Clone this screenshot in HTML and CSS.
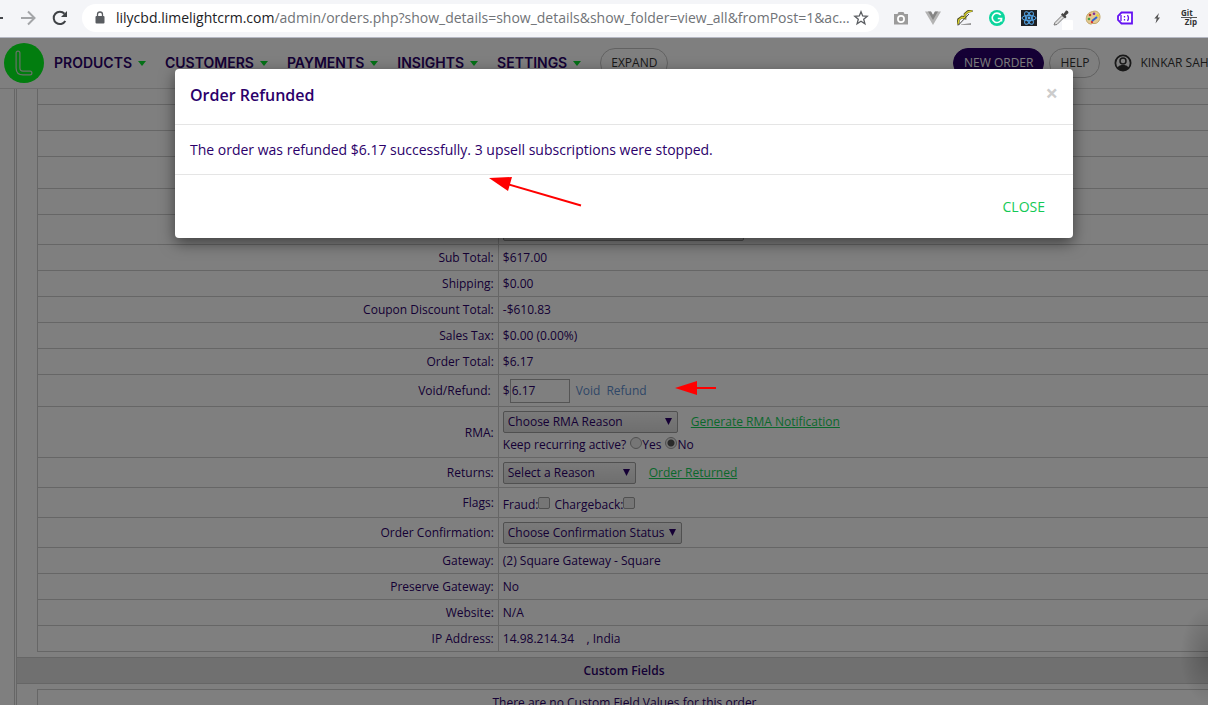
FILE: index.html
```html
<!DOCTYPE html>
<html lang="en">
<head>
<meta charset="utf-8">
<title>Order Details</title>
<link rel="stylesheet" href="styles.css">
</head>
<body>
<div class="browser-bar">
  <button class="bar-btn back" aria-label="Back"><svg width="20" height="20" viewBox="0 0 20 20"><path d="M4 10H17" stroke="#45484c" stroke-width="2" fill="none"/></svg></button>
  <button class="bar-btn" aria-label="Forward"><svg width="20" height="20" viewBox="0 0 20 20"><path d="M3 10H16M10 3.500L16.500 10L10 16.500" stroke="#a3a5a8" stroke-width="2" fill="none"/></svg></button>
  <button class="bar-btn" aria-label="Reload"><svg width="20" height="20" viewBox="0 0 20 20"><path d="M15.300 13A6.200 6.200 0 1 1 14.500 5.700" stroke="#3f4246" stroke-width="2" fill="none"/><path d="M17 3V9H11Z" fill="#3f4246"/></svg></button>
  <div class="omnibox">
    <svg class="lock" width="12" height="14" viewBox="0 0 12 14"><rect x="1.500" y="5" width="9" height="7.500" rx="1" fill="#5a5d61"/><path d="M3.500 5.500V3.500a2.500 2.500 0 0 1 5 0V5.500" fill="none" stroke="#5a5d61" stroke-width="1.300"/></svg>
    <div class="url"><span class="host">lilycbd.limelightcrm.com</span>/admin/orders.php?show_details=show_details&amp;show_folder=view_all&amp;fromPost=1&amp;ac…</div>
    <button class="star" aria-label="Bookmark this page"><svg width="16" height="16" viewBox="0 0 16 16"><path d="M8 1.800L9.700 6L14.200 6.300L10.700 9.200L11.900 13.700L8 11.200L4.100 13.700L5.300 9.200L1.800 6.300L6.300 6Z" fill="none" stroke="#5a5d61" stroke-width="1.300"/></svg></button>
  </div>
  <div class="extensions">
    <svg width="16" height="16" viewBox="0 0 16 16"><path d="M1 4H4.500L5.500 2H10.500L11.500 4H15V14.500H1Z" fill="#9b9b9b"/><circle cx="8" cy="9" r="3.100" fill="none" stroke="#fff" stroke-width="1.700"/></svg>
    <svg width="16" height="16" viewBox="0 0 16 16"><path d="M0 1.500H6L8 5L10 1.500H16L8 15Z" fill="#b3b3b3"/><path d="M3 1.500H6L8 5L10 1.500H13L8 10Z" fill="#858585"/></svg>
    <svg width="16" height="16" viewBox="0 0 16 16"><path d="M1 14.500L1.500 9.500L5 7L8 8V4L11 1.500L15.500 .5" fill="none" stroke="#4d4c24" stroke-width="2.600"/><path d="M1 14L1.800 9.800L5 7.300L8 8.200V4.200L11 1.800L15 .8" fill="none" stroke="#dcd52c" stroke-width="1.300"/><path d="M1 15.500L12 4" stroke="#444"/><path d="M4 14.500L14 13V15H4Z" fill="#999"/></svg>
    <svg width="16" height="16" viewBox="0 0 16 16"><circle cx="8" cy="8" r="8" fill="#0bd59d"/><path d="M11.700 5A4.700 4.700 0 1 0 12.600 8.500H8.800M12.500 8.500V11.500" fill="none" stroke="#fff" stroke-width="1.600"/></svg>
    <svg width="16" height="16" viewBox="0 0 16 16"><rect width="16" height="16" fill="#202124"/><g fill="none" stroke="#55a9ed"><ellipse cx="8" cy="8" rx="7" ry="2.700"/><ellipse cx="8" cy="8" rx="7" ry="2.700" transform="rotate(60 8 8)"/><ellipse cx="8" cy="8" rx="7" ry="2.700" transform="rotate(120 8 8)"/></g><circle cx="8" cy="8" r="1.400" fill="#55a9ed"/></svg>
    <svg class="picker" width="20" height="20" viewBox="0 0 20 20"><path d="M1 15L2 12.500L9 5.500L11 7.500L4 14.500Z" fill="#ddd" stroke="#777"/><path d="M8 4.500L9.500 3L10.500 4L13 .5Q15.500 0 15.500 3L12.500 5.500L13.500 7L12 8.500Z" fill="#444"/><rect x="9" y="10" width="11" height="11" rx="1" fill="#fff"/></svg>
    <svg width="16" height="16" viewBox="0 0 16 16"><path d="M7.500 1.500C12 0 15 3 15 7C15 11 12 14 9 13.500C6 13 7 15 4 13.500C1 12 1 9 1.500 7C2 4 4 2.500 7.500 1.500Z" fill="#e3c991" stroke="#c4a66a"/><circle cx="5" cy="5" r="1.300" fill="#c0392b"/><circle cx="9" cy="3.700" r="1.300" fill="#7b2fa0"/><circle cx="12.500" cy="5.500" r="1.200" fill="#e7d228"/><circle cx="4" cy="9" r="1.300" fill="#43a047"/><circle cx="7" cy="12" r="1.200" fill="#d33"/><path d="M7 11L12 7" stroke="#2f62cf" stroke-width="2"/></svg>
    <svg width="16" height="16" viewBox="0 0 16 16"><path d="M4.500 2.500H15V13.500H4.500L1 10V6Z" fill="#fff" stroke="#6412f2" stroke-width="1.800"/><path d="M4 5V11M7.500 6V7.500M7.500 9V10.500M10.500 5Q12.500 8 10.500 11" fill="none" stroke="#6412f2" stroke-width="1.300"/></svg>
    <svg width="16" height="16" viewBox="0 0 16 16"><path d="M10 3L5.300 8.500H7.700L6.500 13.500L11 7.500H8.700Z" fill="#555"/></svg>
    <div class="gitzip"><span>Git</span><span>Zip</span></div>
  </div>
</div>

<div class="viewport">
  <div class="app">
    <header class="topbar">
      <a class="logo" href="#" aria-label="Home"><svg width="40" height="40" viewBox="0 0 40 40"><circle cx="20" cy="20" r="20" fill="#04fa1e"/><path d="M14 10V25Q14 30 19 30H26" fill="none" stroke="#d2e6d2" stroke-width="5" stroke-linecap="round"/><path d="M14 10V25Q14 30 19 30H26" fill="none" stroke="#04fa1e" stroke-width="2.600" stroke-linecap="round"/></svg></a>
      <nav class="menu">
        <button>PRODUCTS</button>
        <button>CUSTOMERS</button>
        <button>PAYMENTS</button>
        <button>INSIGHTS</button>
        <button>SETTINGS</button>
      </nav>
      <button class="pill">EXPAND</button>
      <div class="account">
        <button class="pill primary">NEW ORDER</button>
        <button class="pill">HELP</button>
        <a class="user" href="#"><svg width="18" height="18" viewBox="0 0 18 18"><circle cx="9" cy="9" r="7.600" fill="none" stroke="#333" stroke-width="1.800"/><circle cx="9" cy="7" r="3" fill="none" stroke="#333" stroke-width="1.500"/><path d="M3 14Q5 11 7.500 11H10.500Q13 11 15 14Q12 17 9 17Q6 17 3 14Z" fill="#333"/></svg>KINKAR SAH</a>
      </div>
    </header>

    <main class="sheet">
      <div class="panel">
        <table class="details">
          <colgroup><col class="label-col"><col></colgroup>
          <tbody>
            <tr class="partial"><th></th><td></td></tr>
            <tr><th></th><td></td></tr>
            <tr><th></th><td></td></tr>
            <tr class="tall"><th></th><td></td></tr>
            <tr><th></th><td></td></tr>
            <tr class="mid"><th></th><td><select class="w-wide" aria-label="Order item"><option></option></select></td></tr>
            <tr><th>Sub Total:</th><td>$617.00</td></tr>
            <tr><th>Shipping:</th><td>$0.00</td></tr>
            <tr><th>Coupon Discount Total:</th><td>-$610.83</td></tr>
            <tr><th>Sales Tax:</th><td>$0.00 (0.00%)</td></tr>
            <tr><th>Order Total:</th><td>$6.17</td></tr>
            <tr class="tall"><th><label for="refund">Void/Refund:&nbsp;</label></th><td><div class="line">$<input id="refund" class="amount" type="text" value="6.17"><a class="action" href="#">Void</a><a class="action" href="#">Refund</a></div></td></tr>
            <tr class="double"><th><label for="rma">RMA:</label></th><td>
              <div class="line"><select id="rma" class="w-rma"><option>Choose RMA Reason</option></select><a class="go" href="#">Generate RMA Notification</a></div>
              <div class="line choices">Keep recurring active?<input id="yes" type="radio" name="recurring"><label for="yes">Yes</label><input id="no" type="radio" name="recurring" checked><label for="no">No</label></div>
            </td></tr>
            <tr class="mid"><th><label for="returns">Returns:</label></th><td><div class="line"><select id="returns" class="w-returns"><option>Select a Reason</option></select><a class="go" href="#">Order Returned</a></div></td></tr>
            <tr class="mid"><th>Flags:</th><td><div class="line flags"><label for="fraud">Fraud:</label><input id="fraud" type="checkbox"><label for="charge">Chargeback:</label><input id="charge" type="checkbox"></div></td></tr>
            <tr class="mid"><th><label for="confirm">Order Confirmation:</label></th><td><div class="line"><select id="confirm" class="w-confirm"><option>Choose Confirmation Status</option></select></div></td></tr>
            <tr><th>Gateway:</th><td>(2) Square Gateway - Square</td></tr>
            <tr><th>Preserve Gateway:</th><td>No</td></tr>
            <tr><th>Website:</th><td>N/A</td></tr>
            <tr><th>IP Address:</th><td>14.98.214.34 &nbsp;&nbsp; , India</td></tr>
          </tbody>
        </table>
        <h2 class="band">Custom Fields</h2>
        <p class="empty">There are no Custom Field Values for this order</p>
      </div>
    </main>
    <div class="widget-shadow"></div>
  </div>

  <div class="backdrop">
    <section class="dialog" role="dialog" aria-labelledby="dialog-title">
      <div class="dialog-head">
        <h1 id="dialog-title">Order Refunded</h1>
        <button class="dismiss" aria-label="Dismiss">×</button>
      </div>
      <p class="dialog-body">The order was refunded $6.17 successfully. 3 upsell subscriptions were stopped.</p>
      <div class="dialog-foot"><button class="close">CLOSE</button></div>
      <svg class="arrow-long" width="94" height="32" viewBox="0 0 94 32"><path d="M18 8L92 29.500" stroke="#f00" stroke-width="2"/><path d="M0 2L23 1L19 15Z" fill="#f00"/></svg>
    </section>
    <svg class="arrow-short" width="42" height="16" viewBox="0 0 42 16"><path d="M20 8H41" stroke="#f00" stroke-width="2"/><path d="M0 8L22 1V15Z" fill="#f00"/></svg>
  </div>
</div>
</body>
</html>
```
FILE: styles.css
```css
* { box-sizing: border-box; }

body {
  margin: 0;
  height: 100vh;
  display: flex;
  flex-direction: column;
  overflow: hidden;
  font: 12px/18px "Open Sans", "Noto Sans", sans-serif;
  color: #2b006a;
}

button {
  font: inherit;
  color: inherit;
  background: none;
  border: 0;
  padding: 0;
  cursor: pointer;
}

svg { display: block; flex: none; }

/* Browser toolbar */
.browser-bar {
  height: 38px;
  flex: none;
  display: flex;
  align-items: center;
  gap: 12px;
  padding: 0 11px 2px 0;
  background: #f4f5f8;
  border-bottom: 1px solid #b5b8c3;
}
.back { margin-left: -14px; }
.omnibox {
  flex: 1;
  min-width: 0;
  height: 28px;
  display: flex;
  align-items: center;
  padding: 0 10px 0 12px;
  border-radius: 14px;
  background: #fff;
}
.url {
  flex: 1;
  min-width: 0;
  margin-left: 10px;
  overflow: hidden;
  white-space: nowrap;
  font: 14px/20px "Open Sans", sans-serif;
  color: #707377;
}
.host { color: #202124; }
.extensions {
  display: flex;
  align-items: center;
  gap: 16px;
  margin-left: 2px;
}
.picker { margin: 4px -4px 0 0; }
.gitzip {
  width: 16px;
  display: flex;
  flex-direction: column;
  font: 700 8px/8px "Open Sans", sans-serif;
  color: #333;
}
.gitzip span:last-child {
  border-top: 1px solid #555;
  text-align: right;
}

/* Application */
.viewport {
  flex: 1;
  min-height: 0;
  position: relative;
  overflow: hidden;
}
.app { width: calc(100% + 40px); }
.topbar {
  height: 51px;
  display: flex;
  align-items: center;
  padding-left: 4px;
  border-bottom: 1px solid #dcdcdc;
  white-space: nowrap;
}
.menu {
  display: flex;
  gap: 19px;
  margin: 0 19px 0 10px;
  font: 600 14px/18px Inter, sans-serif;
}
.menu button {
  display: flex;
  align-items: center;
  gap: 6px;
}
.menu button::after {
  content: "";
  border: 4px solid transparent;
  border-top: 5px solid #08e02c;
  border-bottom: 0;
}
.pill {
  height: 30px;
  padding: 0 10px;
  border: 1px solid #c4c4c4;
  border-radius: 15px;
  font-weight: 500;
  color: #333;
}
.primary {
  background: #2b006a;
  border-color: #2b006a;
  color: #fff;
}
.account {
  display: flex;
  align-items: center;
  gap: 5px;
  margin-left: auto;
  width: 295px;
}
.user {
  display: flex;
  align-items: center;
  gap: 8px;
  margin-left: 9px;
  font-weight: 500;
  color: #333;
  text-decoration: none;
}

.sheet {
  margin: 0 16px 0 14px;
  border-left: 1px solid #ccc;
  padding-left: 1px;
}
.panel { border-left: 1px solid #ccc; }
.details {
  width: calc(100% - 40px);
  margin: 0 20px;
  border-collapse: collapse;
  table-layout: fixed;
  border-left: 1px solid #ccc;
}
.label-col { width: 39.25%; }
.details th, .details td {
  height: 26px;
  padding: 2px 4px 0;
  border: 1px solid #ccc;
  font-weight: 400;
  text-align: left;
}
.details th { text-align: right; }
.details .partial th, .details .partial td { height: 15px; border-top: 0; }
.details .mid th, .details .mid td { height: 30px; }
.details .tall th, .details .tall td { height: 32px; }
.details .double th, .details .double td { height: 51px; }

.line { display: flex; align-items: center; }
select {
  appearance: none;
  height: 22px;
  padding: 0 4px;
  border: 1px solid #a0a0a0;
  border-radius: 2px;
  font: inherit;
  color: inherit;
  background: url("data:image/svg+xml,%3Csvg xmlns='http://www.w3.org/2000/svg' width='8' height='8'%3E%3Cpath d='M0 0H7L3.500 7Z' fill='%232b006a'/%3E%3C/svg%3E") no-repeat right 4px center, linear-gradient(#f4f4f4, #dedede);
}
.w-wide { width: 241px; display: block; }
.w-rma { width: 175px; }
.w-returns { width: 133px; }
.w-confirm { width: 179px; }
.amount {
  width: 60px;
  height: 24px;
  padding: 0 1px 2px;
  border: 1px solid #aaa;
  font: inherit;
  color: inherit;
  background: #fff;
}
.action {
  margin-left: 6px;
  color: #5f8fd0;
  text-decoration: none;
}
.go { margin-left: 13px; color: #14d058; }

input[type="radio"], input[type="checkbox"] {
  appearance: none;
  width: 12px;
  height: 12px;
  margin: 0 0 4px;
  border: 1px solid #a0a0a0;
  border-radius: 2px;
  background: #ececec;
}
input[type="radio"] { border-radius: 50%; margin-left: 4px; }
input[type="radio"]:checked { background: radial-gradient(circle, #555 3px, #ececec 4px); }
.choices { margin-top: 3px; }
.flags { padding-top: 4px; }
.flags input { margin-right: 4px; }

.band {
  margin: 5px 0;
  height: 27px;
  border: 1px solid #ccc;
  border-left: 0;
  background: #e0e0e0;
  font: 600 12px/25px "Open Sans", sans-serif;
  text-align: center;
}
.empty {
  margin: 0 20px;
  height: 28px;
  border: 1px solid #ccc;
  line-height: 26px;
  text-align: center;
}
.widget-shadow {
  position: absolute;
  right: 0;
  bottom: 0;
  width: 28px;
  height: 100px;
  background: radial-gradient(ellipse at right center, rgba(0, 0, 0, .2), transparent 70%);
}

/* Dialog */
.backdrop {
  position: absolute;
  inset: 0 -40px 0 0;
  padding: 31px 175px;
  background: rgba(0, 0, 0, .5);
}
.dialog {
  position: relative;
  border-radius: 4px;
  background: #fff;
  box-shadow: 0 5px 15px rgba(0, 0, 0, .5);
}
.dialog-head {
  display: flex;
  justify-content: space-between;
  height: 56px;
  padding: 14px 15px;
  border-bottom: 1px solid #e5e5e5;
}
.dialog-head h1 {
  margin: 0;
  font: 600 16px/24px "Open Sans", sans-serif;
}
.dismiss {
  font: 700 22px/18px "Open Sans", sans-serif;
  height: 18px;
  color: #ccc;
}
.dialog-body {
  margin: 0;
  padding: 14px 15px;
  border-bottom: 1px solid #e5e5e5;
  font-size: 14px;
  line-height: 21px;
}
.dialog-foot {
  display: flex;
  justify-content: flex-end;
  padding: 22px 28px;
}
.close { font-size: 14px; line-height: 19px; color: #14c955; }
.arrow-long { position: absolute; left: 314px; top: 107px; }
.arrow-short { position: absolute; left: 675px; top: 342px; }
```
